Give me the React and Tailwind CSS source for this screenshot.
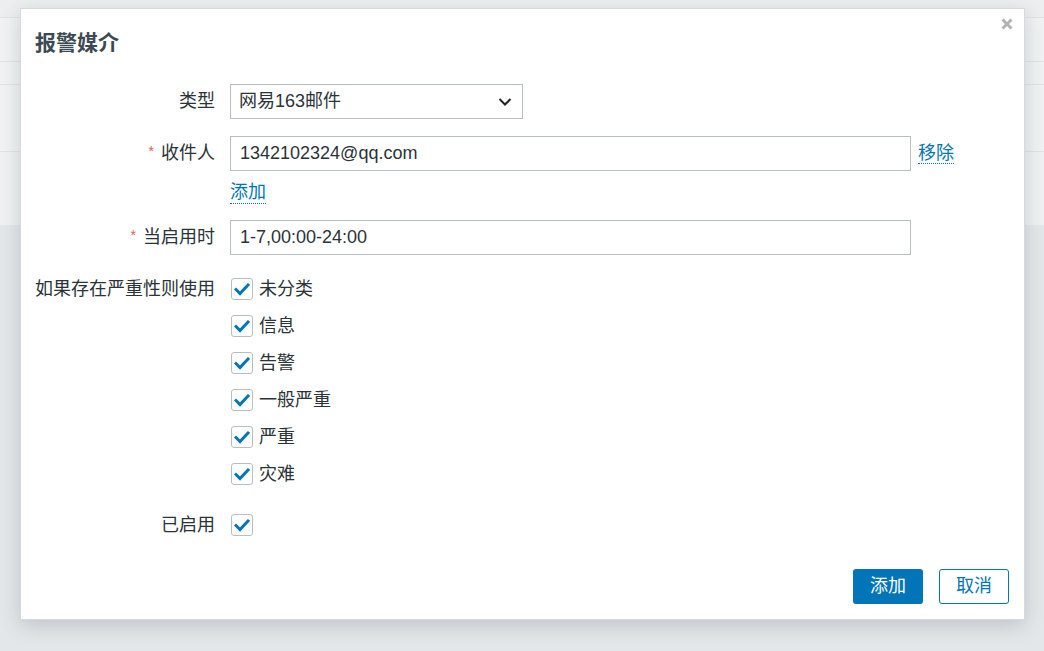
import React from "react";

const font = { fontFamily: '"Liberation Sans", "Noto Sans CJK SC", sans-serif' };

function Check() {
  return (
    <span className="w-[22px] h-[22px] border border-[#b8bec2] rounded-[3px] bg-white flex items-center justify-center shrink-0">
      <svg width="16" height="14" viewBox="0 0 16 14">
        <path d="M2 7.5 L6 11.5 L14 3" fill="none" stroke="#0275b8" strokeWidth="3" strokeLinecap="square" />
      </svg>
    </span>
  );
}

function Star() {
  return <span className="text-[#e45959] text-[14px] mr-[7px] relative top-[-3px]">*</span>;
}

export default function App() {
  const severities = ["未分类", "信息", "告警", "一般严重", "严重", "灾难"];
  return (
    <div className="w-[1044px] h-[651px] relative overflow-hidden bg-[#e4e7e9]" style={font}>
      {/* background page */}
      <div className="flex flex-col">
        <div className="h-[18px] bg-[#eceeef] border-b border-[#dfe2e4]" />
        <div className="h-[44px] bg-[#f0f2f3] border-b border-[#e0e3e5]" />
        <div className="h-[23px] bg-[#f0f2f3] border-b border-[#e0e3e5]" />
        <div className="h-[67px] bg-[#f0f2f3] border-b border-[#e0e3e5]" />
        <div className="h-[73px] bg-[#eff1f2]" />
      </div>

      {/* modal */}
      <div className="absolute left-[20px] top-[8px] w-[1005px] h-[612px] bg-white border border-[#d5dadd] shadow-[0_6px_18px_rgba(60,80,95,0.22)] flex flex-col">
        <div className="relative pt-[21px] pl-[14px] h-[75px]">
          <h4 className="text-[21px] leading-[26px] font-bold text-[#3b4a53]">报警媒介</h4>
          <button className="absolute right-[10px] top-[8px] w-[14px] h-[14px] flex items-center justify-center">
            <svg width="12" height="12" viewBox="0 0 12 12">
              <path d="M1.5 1.5 L10.5 10.5 M10.5 1.5 L1.5 10.5" stroke="#b0b4b7" strokeWidth="3" />
            </svg>
          </button>
        </div>

        <div className="flex flex-col pl-[14px] text-[18px] text-[#2a3338]">
          {/* type */}
          <div className="flex items-center h-[35px]">
            <div className="w-[195px] text-right pr-[15px]">类型</div>
            <div className="w-[293px] h-[35px] border border-[#b8bec2] flex items-center justify-between pl-[8px] pr-[10px]">
              <span>网易163邮件</span>
              <svg width="14" height="10" viewBox="0 0 14 10">
                <path d="M1.5 2 L7 7.5 L12.5 2" fill="none" stroke="#222" strokeWidth="2" />
              </svg>
            </div>
          </div>

          {/* recipient */}
          <div className="flex items-center h-[35px] mt-[17px]">
            <div className="w-[195px] text-right pr-[15px]"><Star />收件人</div>
            <div className="w-[681px] h-[35px] border border-[#b8bec2] flex items-center pl-[9px]">1342102324@qq.com</div>
            <span className="ml-[7px] text-[#0275b8] leading-[20px] border-b border-dotted border-[#0275b8]">移除</span>
          </div>
          <div className="flex mt-[11px] h-[22px]">
            <div className="w-[195px]" />
            <span className="text-[#0275b8] leading-[20px] border-b border-dotted border-[#0275b8]">添加</span>
          </div>

          {/* when active */}
          <div className="flex items-center h-[35px] mt-[16px]">
            <div className="w-[195px] text-right pr-[15px]"><Star />当启用时</div>
            <div className="w-[681px] h-[35px] border border-[#b8bec2] flex items-center pl-[9px]">1-7,00:00-24:00</div>
          </div>

          {/* severities */}
          <div className="flex mt-[23px]">
            <div className="w-[195px] text-right pr-[15px] leading-[22px] whitespace-nowrap">如果存在严重性则使用</div>
            <div className="flex flex-col gap-[15px] pl-[1px]">
              {severities.map((s) => (
                <div key={s} className="flex items-center h-[22px] gap-[6px]">
                  <Check />
                  <span className="leading-[22px]">{s}</span>
                </div>
              ))}
            </div>
          </div>

          {/* enabled */}
          <div className="flex items-center mt-[29px] h-[22px]">
            <div className="w-[195px] text-right pr-[15px]">已启用</div>
            <div className="pl-[1px]"><Check /></div>
          </div>
        </div>

        <div className="mt-auto flex justify-end gap-[16px] pr-[15px] pb-[15px]">
          <button className="w-[70px] h-[35px] rounded-[3px] bg-[#0275b8] text-white text-[18px]">添加</button>
          <button className="w-[70px] h-[35px] rounded-[3px] border border-[#0275b8] bg-white text-[#0275b8] text-[18px]">取消</button>
        </div>
      </div>
    </div>
  );
}
